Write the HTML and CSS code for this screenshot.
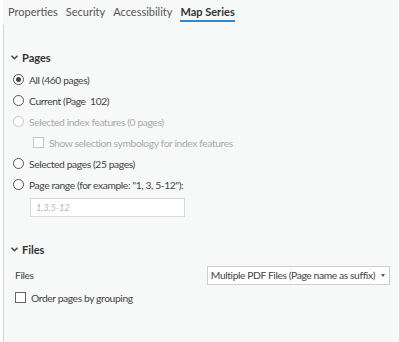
FILE: index.html
```html
<!DOCTYPE html>
<html>
<head>
<meta charset="utf-8">
<link rel="stylesheet" href="styles.css">
</head>
<body>
<div class="pane">
  <div class="tabs">
    <span class="tab">Properties</span>
    <span class="tab">Security</span>
    <span class="tab">Accessibility</span>
    <span class="tab active">Map Series</span>
  </div>
  <div class="body">
    <div class="section">
      <div class="sec-head"><svg class="chev" width="7" height="5" viewBox="0 0 7 5"><path d="M0.5 0.8 L3.5 3.8 L6.5 0.8" fill="none" stroke="#444" stroke-width="1.5"/></svg><span>Pages</span></div>
      <div class="opt"><span class="radio on"></span><span>All (460 pages)</span></div>
      <div class="opt"><span class="radio"></span><span>Current (Page&nbsp;&nbsp;102)</span></div>
      <div class="opt disabled"><span class="radio"></span><span>Selected index features (0 pages)</span></div>
      <div class="opt sub disabled"><span class="check"></span><span>Show selection symbology for index features</span></div>
      <div class="opt"><span class="radio"></span><span>Selected pages (25 pages)</span></div>
      <div class="opt"><span class="radio"></span><span>Page range (for example: "1, 3, 5-12"):</span></div>
      <div class="input">1,3,5-12</div>
    </div>
    <div class="section files">
      <div class="sec-head"><svg class="chev" width="7" height="5" viewBox="0 0 7 5"><path d="M0.5 0.8 L3.5 3.8 L6.5 0.8" fill="none" stroke="#444" stroke-width="1.5"/></svg><span>Files</span></div>
      <div class="row">
        <span class="label">Files</span>
        <div class="select"><span>Multiple PDF Files (Page name as suffix)</span><span class="caret"></span></div>
      </div>
      <div class="opt check-row"><span class="check"></span><span>Order pages by grouping</span></div>
    </div>
  </div>
</div>
</body>
</html>
```

FILE: styles.css
```css
html, body { margin: 0; padding: 0; background: #ffffff; }
body {
  width: 400px; height: 342px; overflow: hidden;
  font-family: "Lato", "Noto Sans", sans-serif;
  font-size: 10.3px; letter-spacing: -0.4px; color: #444;
}
.pane {
  margin-left: 3px; height: 342px;
  background: #f7f8f8;
  display: flex; flex-direction: column;
  border-right: 1px solid #d8d8d8;
}
.tabs {
  display: flex; gap: 8px; padding: 3px 0 0 5px; height: 22px;
  background: #f7f8f8;
  font-size: 11px; letter-spacing: 0; color: #555;
}
.tab { line-height: 18px; height: 20px; }
.tab.active { font-weight: 700; color: #333; border-bottom: 2px solid #2a8ad4; height: 17px; }
.body {
  flex: 1; border-left: 1px solid #d4d4d4;
  padding: 22px 0 0 0;
}
.sec-head {
  display: flex; align-items: center; gap: 4px; padding-left: 7px;
  font-weight: 700; font-size: 11px; letter-spacing: 0; color: #333; height: 20px;
}
.chev { margin-top: 1px; }
.opt { display: flex; align-items: center; gap: 5px; height: 21px; padding-left: 9px; }
.section .sec-head + .opt { margin-top: 2px; }
.opt.sub { padding-left: 29px; }
.opt.disabled { color: #aaa; }
.radio {
  border: 1px solid #555; border-radius: 50%;
  box-sizing: border-box; width: 11px; height: 11px; background: #fff;
  display: inline-flex; align-items: center; justify-content: center;
}
.radio.on::after { content: ""; width: 5px; height: 5px; border-radius: 50%; background: #444; }
.disabled .radio { border-color: #c4c4c4; }
.check { width: 11px; height: 11px; box-sizing: border-box; border: 1px solid #666; background: #fff; }
.disabled .check { border-color: #c4c4c4; }
.input {
  margin: 3px 0 0 26px; width: 155px; height: 19px; box-sizing: border-box;
  border: 1px solid #d8d8d8; background: #fff;
  font-style: italic; color: #b8b8b8; font-size: 9.5px; letter-spacing: -0.2px; padding-left: 5px; line-height: 17px;
}
.files { margin-top: 22px; }
.row { display: flex; align-items: center; justify-content: space-between; height: 20px; margin-top: 6px; padding: 0 9px 0 11px; }
.select {
  display: flex; align-items: center; gap: 6px; height: 19px; box-sizing: border-box;
  border: 1px solid #cfcfcf; background: #fff; padding: 0 4px 0 3px; color: #444;
}
.caret { width: 0; height: 0; border-left: 2px solid transparent; border-right: 2px solid transparent; border-top: 3px solid #555; }
.check-row { padding-left: 11px; margin-top: 2px; }
```
